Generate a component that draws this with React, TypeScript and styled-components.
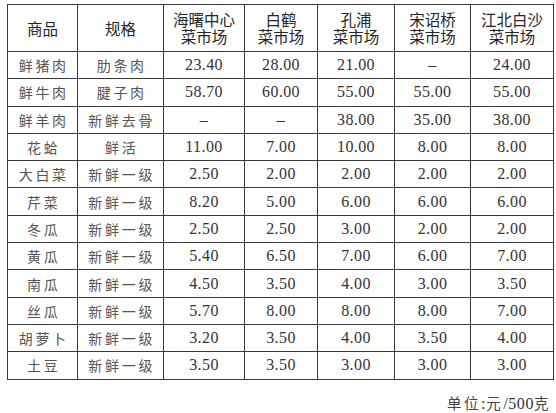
import React from "react";
import styled, { createGlobalStyle } from "styled-components";

const GlobalStyle = createGlobalStyle`
  html, body {
    margin: 0;
    padding: 0;
    background: #ffffff;
  }
`;

const Page = styled.div`
  width: 556px;
  height: 413px;
  padding: 4px 0 0 7px;
  box-sizing: border-box;
  background: #fff;
  overflow: hidden;
`;

const Table = styled.table`
  border-collapse: collapse;
  table-layout: fixed;
  width: 547px;
  border: 1px solid #3a3a3a;
`;

const HeadRow = styled.tr`
  height: 47px;
`;

const BodyRow = styled.tr`
  height: 27.3px;
`;

const HeadCell = styled.th`
  border: 1px solid #3a3a3a;
  padding: 0;
  font-family: "Noto Sans CJK SC", "Noto Sans", sans-serif;
  font-weight: 400;
  font-size: 15.5px;
  line-height: 17px;
  color: #262626;
  text-align: center;
  vertical-align: middle;
`;

const HeadLine = styled.div`
  height: 17px;
`;

const Cell = styled.td<{ $num?: boolean }>`
  border: 1px solid #3a3a3a;
  padding: 0 0 0 ${(p) => (p.$num ? "0" : "2.5px")};
  text-align: center;
  vertical-align: middle;
  font-family: ${(p) =>
    p.$num ? `"Liberation Serif", "Noto Sans CJK SC", serif` : `"Noto Sans CJK SC", "Liberation Serif", serif`};
  font-size: ${(p) => (p.$num ? "16px" : "14px")};
  letter-spacing: ${(p) => (p.$num ? "0.4px" : "2.7px")};
  color: ${(p) => (p.$num ? "#333" : "#555")};
  line-height: 1;
`;

const Caption = styled.div`
  width: 544px;
  margin-top: 15px;
  text-align: right;
  font-family: "Liberation Serif", "Noto Sans CJK SC", serif;
  font-size: 16px;
  line-height: 15px;
  height: 15px;
  letter-spacing: 0.6px;
  color: #333;
`;

const CnPart = styled.span`
  font-family: "Noto Sans CJK SC", serif;
  font-size: 14.5px;
  color: #444;
  letter-spacing: 2.5px;
`;

const widths = [70, 86, 81, 73, 77, 76, 83];

const headers = [
  ["商品"],
  ["规格"],
  ["海曙中心", "菜市场"],
  ["白鹤", "菜市场"],
  ["孔浦", "菜市场"],
  ["宋诏桥", "菜市场"],
  ["江北白沙", "菜市场"],
];

const rows: string[][] = [
  ["鲜猪肉", "肋条肉", "23.40", "28.00", "21.00", "–", "24.00"],
  ["鲜牛肉", "腱子肉", "58.70", "60.00", "55.00", "55.00", "55.00"],
  ["鲜羊肉", "新鲜去骨", "–", "–", "38.00", "35.00", "38.00"],
  ["花蛤", "鲜活", "11.00", "7.00", "10.00", "8.00", "8.00"],
  ["大白菜", "新鲜一级", "2.50", "2.00", "2.00", "2.00", "2.00"],
  ["芹菜", "新鲜一级", "8.20", "5.00", "6.00", "6.00", "6.00"],
  ["冬瓜", "新鲜一级", "2.50", "2.50", "3.00", "2.00", "2.00"],
  ["黄瓜", "新鲜一级", "5.40", "6.50", "7.00", "6.00", "7.00"],
  ["南瓜", "新鲜一级", "4.50", "3.50", "4.00", "3.00", "3.50"],
  ["丝瓜", "新鲜一级", "5.70", "8.00", "8.00", "8.00", "7.00"],
  ["胡萝卜", "新鲜一级", "3.20", "3.50", "4.00", "3.50", "4.00"],
  ["土豆", "新鲜一级", "3.50", "3.50", "3.00", "3.00", "3.00"],
];

export default function App() {
  return (
    <Page>
      <GlobalStyle />
      <Table>
        <colgroup>
          {widths.map((w, i) => (
            <col key={i} style={{ width: w }} />
          ))}
        </colgroup>
        <thead>
          <HeadRow>
            {headers.map((h, i) => (
              <HeadCell key={i}>
                {h.map((line, j) => (
                  <HeadLine key={j}>{line}</HeadLine>
                ))}
              </HeadCell>
            ))}
          </HeadRow>
        </thead>
        <tbody>
          {rows.map((r, i) => (
            <BodyRow key={i}>
              {r.map((v, j) => (
                <Cell key={j} $num={j >= 2}>
                  {v}
                </Cell>
              ))}
            </BodyRow>
          ))}
        </tbody>
      </Table>
      <Caption>
        <CnPart>单位</CnPart>:<CnPart>元</CnPart>/500<CnPart>克</CnPart>
      </Caption>
    </Page>
  );
}
